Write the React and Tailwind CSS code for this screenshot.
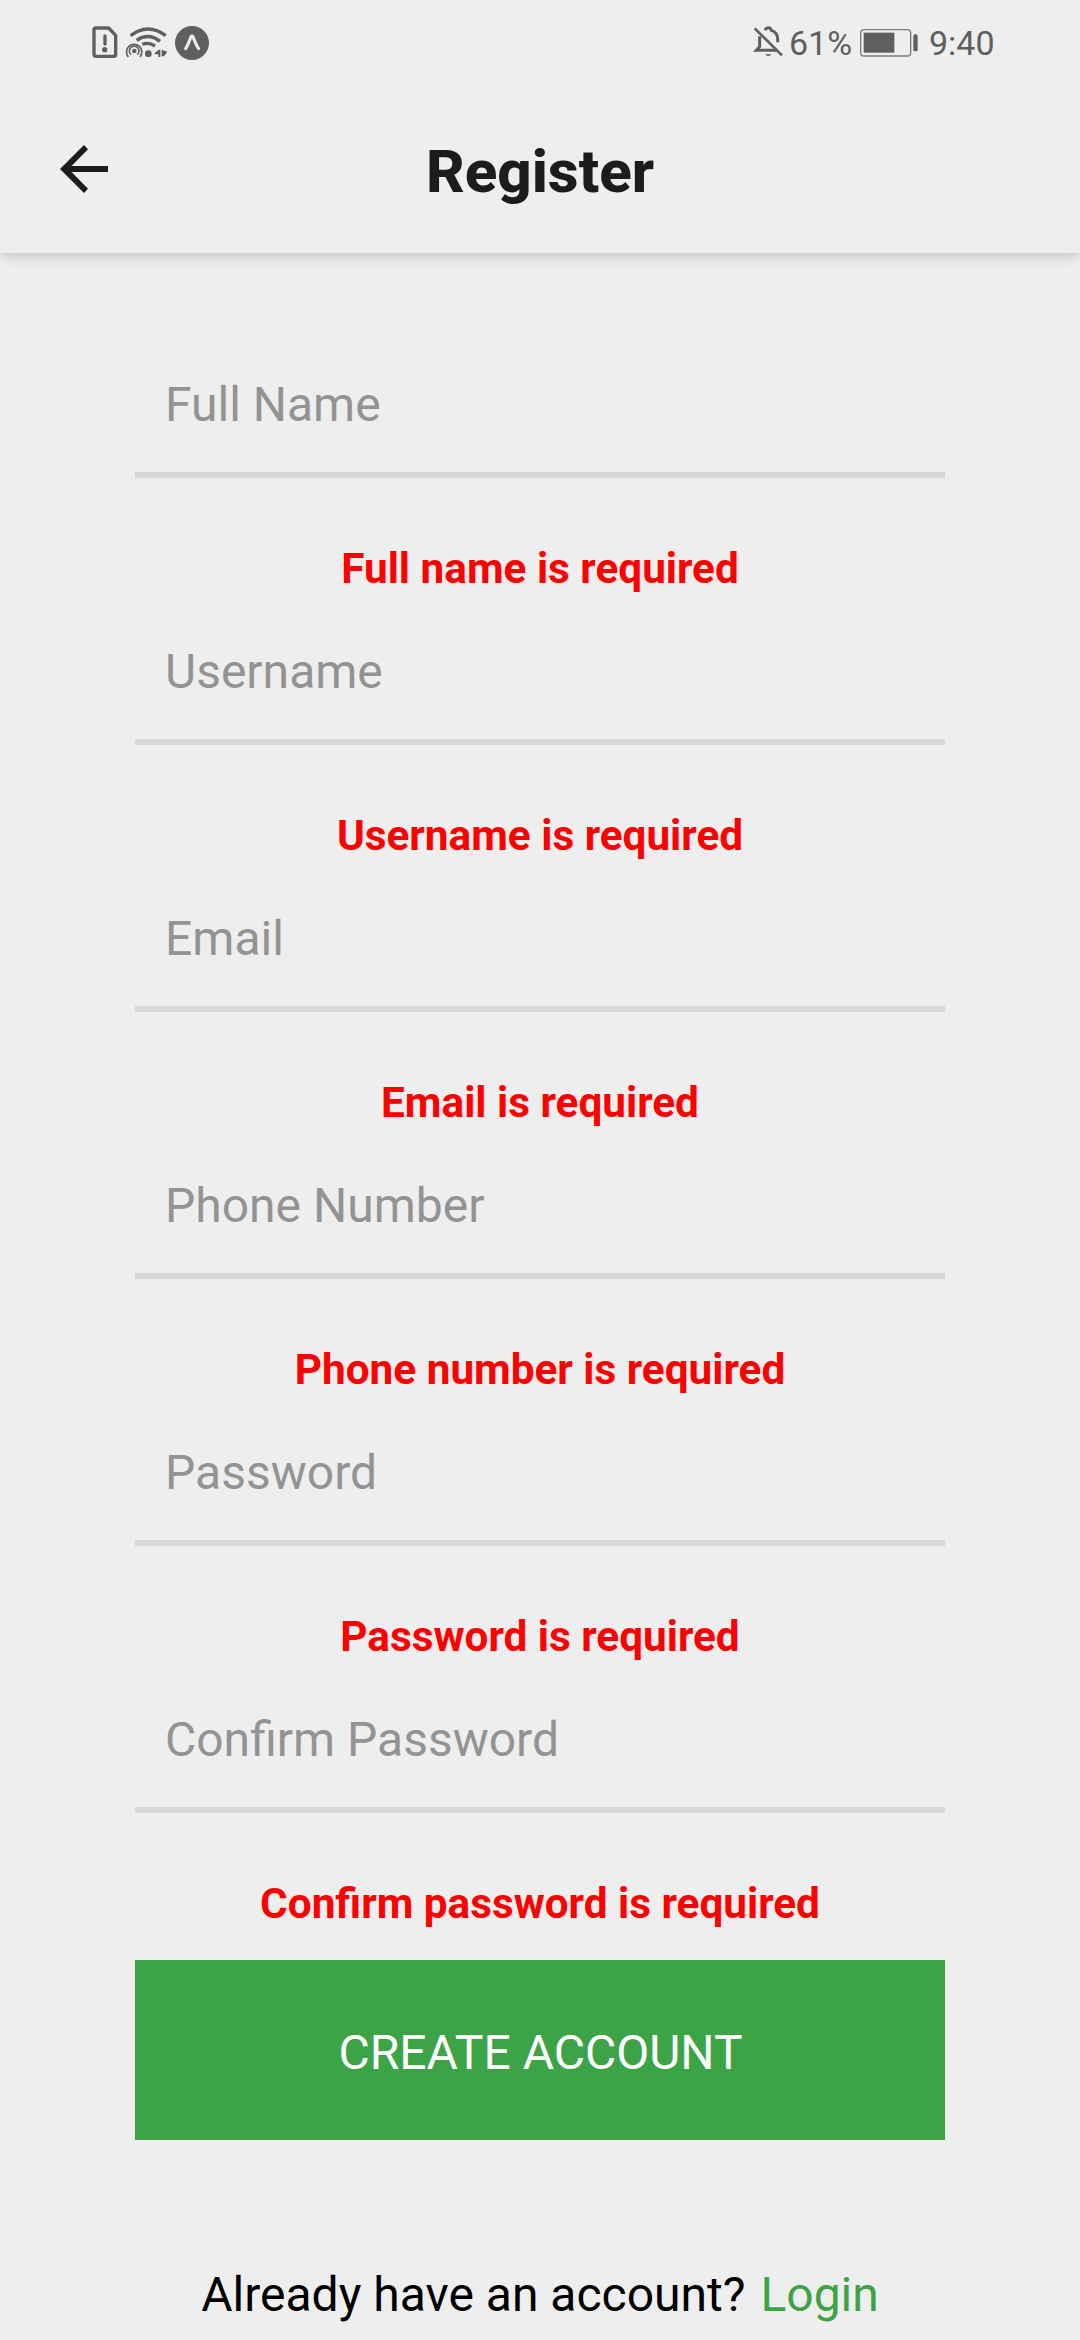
const FIELDS = [
  { label: "Full Name", error: "Full name is required" },
  { label: "Username", error: "Username is required" },
  { label: "Email", error: "Email is required" },
  { label: "Phone Number", error: "Phone number is required" },
  { label: "Password", error: "Password is required" },
  { label: "Confirm Password", error: "Confirm password is required" },
];

// SIM alert, Wi-Fi with hotspot, and Expo badge
function StatusIcons() {
  return (
    <svg width="140" height="55" viewBox="0 0 420 165" fill="none" stroke="#5f5f5f">
      <path d="M48 39H86L107 61V118Q107 124 101 124H48Q42 124 42 118V45Q42 39 48 39Z" strokeWidth="10" strokeLinejoin="round" />
      <path d="M75 63V87" strokeWidth="10" strokeLinecap="round" />
      <circle cx="74" cy="104" r="8" fill="#5f5f5f" stroke="none" />
      <path d="M152 62Q204 22 257 62" strokeWidth="10" />
      <path d="M170 76Q205 52 240 79" strokeWidth="10" />
      <path d="M187 88Q206 80 225 93" strokeWidth="10" />
      <path d="M145 126A23 23 0 1 1 180 126" strokeWidth="5" />
      <path d="M153 119A14.500 14.500 0 1 1 172 119" strokeWidth="5" />
      <circle cx="163" cy="108" r="7" fill="#5f5f5f" stroke="none" />
      <circle cx="205" cy="116" r="10" fill="#5f5f5f" stroke="none" />
      <path d="M241 104V126H235V118H224V114L236 104ZM245 104L262 110L252 124H245Z" fill="#5f5f5f" stroke="none" />
      <circle cx="336" cy="84" r="51" fill="#5f5f5f" stroke="none" />
      <path d="M317 101C324 91 328 77 333 65Q336 61 339 65C344 77 348 91 356 101" stroke="#eee" strokeWidth="9" strokeLinecap="round" strokeLinejoin="round" />
    </svg>
  );
}

function BellOff() {
  return (
    <svg width="30" height="33" viewBox="0 0 90 99" fill="none" stroke="#5f5f5f" strokeWidth="8">
      <path d="M5 7L87 88" />
      <path d="M20 31V62L10 73H71" strokeWidth="9" />
      <path d="M36 13Q39 5 46 5Q53 5 55 13Q74 19 74 40V49" strokeWidth="9" />
      <path d="M36 85H56Q46 96 36 85Z" fill="#5f5f5f" stroke="none" />
    </svg>
  );
}

function Battery() {
  return (
    <svg width="58" height="28" viewBox="0 0 174 84">
      <rect x="2" y="2" width="150" height="79" rx="10" fill="none" stroke="#7a7a7a" strokeWidth="4" />
      <rect x="11" y="11" width="92" height="60" fill="#5f5f5f" />
      <rect x="160" y="16" width="13" height="51" rx="5" fill="#5f5f5f" />
    </svg>
  );
}

function StatusBar() {
  return (
    <div className="flex h-[85px] items-start pl-20 pt-[15px] text-[34px] leading-[40px] text-[#5f5f5f]">
      <StatusIcons />
      <div className="ml-[533px] mt-[11px]"><BellOff /></div>
      <span className="ml-[6px] mt-[8px] w-[71px]">61%</span>
      <div className="mt-[14px]"><Battery /></div>
      <span className="ml-[11px] mt-[8px]">9:40</span>
    </div>
  );
}

function Field({ label, error }) {
  return (
    <div className="flex h-[267px] flex-col">
      <label className="flex h-[150px] border-b-[6px] border-[#d8d8d8] pl-[30px] pt-[49px] text-[48px] leading-[56px] text-[#939393]">
        {label}
      </label>
      <p className="mt-[66px] text-center text-[42.3px] font-bold leading-[49px] text-[#ff0000]">{error}</p>
    </div>
  );
}

export default function App() {
  return (
    <div className="flex h-[2340px] w-[1080px] flex-col overflow-hidden bg-[#eeeeee] font-['Roboto',sans-serif]">
      <header className="h-[253px] shrink-0 bg-[#eeeeee] shadow-[0_3px_12px_rgba(0,0,0,0.18)]">
        <StatusBar />
        <div className="flex h-[168px] items-center">
          <svg className="ml-[60px]" width="48" height="48" viewBox="0 0 48 48" fill="#1c1c1e">
            <path d="M48 21H11.500L28 4.200L24 0L0 24L24 48L28 43.800L11.500 27H48Z" />
          </svg>
          <h1 className="w-[864px] pt-[5px] text-center text-[60px] font-extrabold leading-[72px] text-[#1c1c1e]">Register</h1>
        </div>
      </header>
      <main className="mx-[135px] flex flex-col pt-[75px]">
        {FIELDS.map((f) => (
          <Field key={f.label} label={f.label} error={f.error} />
        ))}
        <button className="mt-[30px] flex h-[180px] items-center justify-center bg-[#3ca447] pl-px pt-[6px] text-[48px] leading-[56px] text-white">
          CREATE ACCOUNT
        </button>
        <p className="mt-[127px] flex justify-center gap-[15px] whitespace-nowrap text-[48px] leading-[56px] text-black">
          <span>Already have an account?</span>
          <a className="text-[#3ca447]">Login</a>
        </p>
      </main>
    </div>
  );
}
